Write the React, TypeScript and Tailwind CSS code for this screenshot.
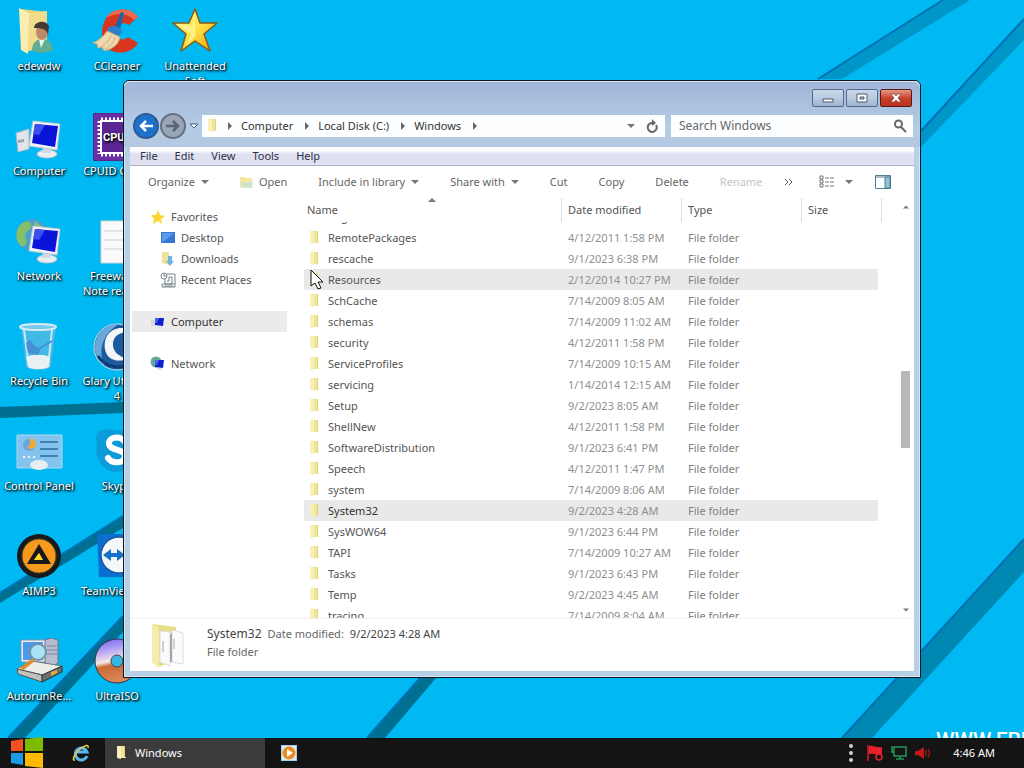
import React, { useEffect, useRef } from 'react';

const folders = [
  { name: 'Registration', date: '7/14/2009 8:04 AM' },
  { name: 'RemotePackages', date: '4/12/2011 1:58 PM' },
  { name: 'rescache', date: '9/1/2023 6:38 PM' },
  { name: 'Resources', date: '2/12/2014 10:27 PM', hover: true },
  { name: 'SchCache', date: '7/14/2009 8:05 AM' },
  { name: 'schemas', date: '7/14/2009 11:02 AM' },
  { name: 'security', date: '4/12/2011 1:58 PM' },
  { name: 'ServiceProfiles', date: '7/14/2009 10:15 AM' },
  { name: 'servicing', date: '1/14/2014 12:15 AM' },
  { name: 'Setup', date: '9/2/2023 8:05 AM' },
  { name: 'ShellNew', date: '4/12/2011 1:58 PM' },
  { name: 'SoftwareDistribution', date: '9/1/2023 6:41 PM' },
  { name: 'Speech', date: '4/12/2011 1:47 PM' },
  { name: 'system', date: '7/14/2009 8:06 AM' },
  { name: 'System32', date: '9/2/2023 4:28 AM', selected: true },
  { name: 'SysWOW64', date: '9/1/2023 6:44 PM' },
  { name: 'TAPI', date: '7/14/2009 10:27 AM' },
  { name: 'Tasks', date: '9/1/2023 6:43 PM' },
  { name: 'Temp', date: '9/2/2023 4:45 AM' },
  { name: 'tracing', date: '7/14/2009 8:04 AM' },
];

/* ---------- Wallpaper ---------- */

const Wallpaper: React.FC = () => (
  <svg className="absolute inset-0 h-full w-full" viewBox="0 0 1024 768" preserveAspectRatio="none" aria-hidden="true">
    <rect width="1024" height="768" fill="#00b9f2" />
    <g fill="#0096c8">
      <path d="M943 0H970L842 79H818Z" />
      <path d="M1024 19V40L921 147V131Z" />
    </g>
    <g fill="#0088b3">
      <path d="M1024 539V572L872 738H842Z" />
    </g>
    <g fill="#007092">
      <path d="M0 407L123 402V413L0 418Z" />
      <path d="M0 593L123 516V528L0 603Z" />
      <path d="M8 738L123 616V632L25 738Z" />
      <path d="M367 738L420 678H436L385 738Z" />
    </g>
    <g stroke="#0070b4" strokeWidth="2">
      <path d="M943 0L818 79" />
      <path d="M1024 19L921 131" />
      <path d="M1024 539L842 738" />
      <path d="M0 593L123 516" />
      <path d="M8 738L123 616" />
      <path d="M367 738L420 678" />
    </g>
  </svg>
);

/* ---------- Desktop icons ---------- */

const UserFolderIcon = () => (
  <svg viewBox="0 0 48 48" className="h-12 w-12">
    <path d="M6 1L32 4V38L11 44Z" fill="#e9d27b" />
    <path d="M14 5L32 3V36L13 42Z" fill="#f0dc8c" />
    <path d="M4 0L14 5L13 46L6 42Z" fill="#fbeeb0" />
    <path d="M17 43C17 34 22 31 28 31S38 36 38 43L26 45Z" fill="#5fae92" />
    <path d="M24 31L26 40L30 31Z" fill="#eef6f2" />
    <ellipse cx="27" cy="24" rx="6" ry="8" fill="#c08a6a" />
    <path d="M19 20C19 13 31 11 34 18L33 27C32 21 27 20 19 20Z" fill="#453a36" />
  </svg>
);

const CCleanerIcon = () => (
  <svg viewBox="0 0 48 48" className="h-12 w-12">
    <path d="M45 9C38-1 20-1 13 10C6 22 8 38 19 43C29 47 41 43 45 35L35 29C31 33 25 32 23 26C21 18 29 12 36 17Z" fill="#d8361f" />
    <path d="M45 9C38-1 20-1 13 10C24 4 34 5 41 12Z" fill="#ef6b4d" />
    <path d="M28 4L31 5L27 22L21 21Z" fill="#1f62b0" />
    <path d="M15 20C19 16 28 18 29 24L24 31L14 25Z" fill="#2f7fd0" />
    <path d="M14 23L27 29C26 36 20 41 11 43L9 39L5 40L4 36L0 35C6 32 10 29 14 23Z" fill="#f0d8ae" stroke="#c9a977" />
    <path d="M18 27C16 33 12 37 8 39M22 29C21 34 17 39 11 42" stroke="#cfae7b" fill="none" />
  </svg>
);

const StarIcon = () => (
  <svg viewBox="0 0 48 48" className="h-12 w-12">
    <defs>
      <linearGradient id="star" x1="0" y1="0" x2="1" y2="1">
        <stop offset="0" stopColor="#fffbb0" />
        <stop offset="0.5" stopColor="#ffe34a" />
        <stop offset="1" stopColor="#f09a00" />
      </linearGradient>
    </defs>
    <path d="M24 1L29 15L46 15L33 26L39 43L24 33L10 43L15 26L2 15L18 15Z" fill="url(#star)" stroke="#8a5a12" strokeWidth="1.5" strokeLinejoin="round" />
    <path d="M24 6L22 18L8 17L20 26L15 38L24 29Z" fill="#fff7a0" opacity="0.7" />
  </svg>
);

const Monitor = () => (
  <g>
    <ellipse cx="32" cy="41" rx="10" ry="4" fill="#e8eef2" stroke="#b9c6d0" />
    <path d="M28 34L36 35V40H27Z" fill="#cfdae2" />
    <path d="M18 8L45 11L42 37L14 33Z" fill="#f0f3f6" stroke="#b8c8d4" />
    <path d="M20 11L43 13L40 34L17 30Z" fill="#0a14d8" />
    <path d="M20 11L30 12L24 22L18 21Z" fill="#3c50ee" />
  </g>
);

const ComputerIcon = () => (
  <svg viewBox="0 0 48 48" className="h-12 w-12">
    <path d="M1 20L14 16V36L3 39Z" fill="#dfe5ea" stroke="#a8b8c4" />
    <path d="M3 27L9 26V29L3 30Z" fill="#9aaab6" />
    <Monitor />
  </svg>
);

const NetworkIcon = () => (
  <svg viewBox="0 0 48 48" className="h-12 w-12">
    <circle cx="17" cy="17" r="16" fill="#4b9ed2" />
    <path d="M3 10C9 0 19 3 16 10C11 15 8 17 12 22C11 28 8 30 5 27C0 21 1 14 3 10ZM20 3L31 12L25 17L19 10Z" fill="#84c06c" />
    <Monitor />
  </svg>
);

const RecycleIcon = () => (
  <svg viewBox="0 0 48 48" className="h-12 w-12">
    <path d="M6 4H41L36 44C31 48 16 48 11 44Z" fill="#4fb8e4" opacity="0.85" />
    <path d="M9 7L14 43M37 7L33 43" stroke="#c5e8f8" strokeWidth="2" />
    <path d="M11 34C17 31 29 31 35 34L34 44C28 47 17 47 13 44Z" fill="#e8f0f4" />
    <path d="M11 20L15 17L21 24L26 25L23 32L13 30Z" fill="#4790d4" />
    <path d="M25 25L37 18" stroke="#4790d4" strokeWidth="2" />
    <ellipse cx="23" cy="4" rx="18" ry="3" fill="#78cbed" stroke="#d5edf7" strokeWidth="2" />
  </svg>
);

const ControlPanelIcon = () => (
  <svg viewBox="0 0 48 48" className="h-12 w-12">
    <path d="M2 7H47V40H2Z" fill="#84c3ee" stroke="#a9daf7" />
    <circle cx="14" cy="17" r="6" fill="#6ba7d8" />
    <path d="M15 17V11A5 5 0 1 1 12 19Z" fill="#eda83b" />
    <path d="M25 14H43M25 21H43M25 28H43" stroke="#3c83b4" strokeWidth="2" />
    <path d="M8 29H22" stroke="#eaf6ff" strokeWidth="2" strokeDasharray="2 3" />
    <ellipse cx="24" cy="37" rx="9" ry="5" fill="#e8edf0" />
  </svg>
);

const AimpIcon = () => (
  <svg viewBox="0 0 48 48" className="h-12 w-12">
    <circle cx="24" cy="23" r="22" fill="#17191b" />
    <circle cx="24" cy="23" r="17" fill="#f79a1c" stroke="#56452b" />
    <path d="M24 11L36 31H30L24 20L19 27H28L30 31H12Z" fill="#16181a" />
    <path d="M24 20L28 27H19Z" fill="#ffdb26" />
  </svg>
);

const AutorunIcon = () => (
  <svg viewBox="0 0 48 48" className="h-12 w-12">
    <path d="M6 2H36V24H6Z" fill="#e9eef6" stroke="#8795a8" />
    <path d="M8 4H28V22H8Z" fill="#4a9ae8" />
    <path d="M30 2L36 0L43 2V25L38 28L30 25Z" fill="#b7bdd0" stroke="#6a7083" />
    <path d="M32 8H42M32 12H42M32 16H42" stroke="#7d86a0" />
    <path d="M2 31L17 23L47 28L28 37Z" fill="#eceee9" stroke="#777" />
    <path d="M2 31L27 37V44L3 36Z" fill="#bfc2bd" stroke="#555" />
    <path d="M27 37L47 28V34L27 44Z" fill="#6c6f70" stroke="#333" />
    <path d="M36 34L42 32V35L36 38Z" fill="#d9b23c" />
    <path d="M18 22L8 30" stroke="#e18c2c" strokeWidth="4" strokeLinecap="round" />
    <circle cx="23" cy="14" r="8" fill="#a9e2f6" stroke="#7193ab" strokeWidth="2" />
  </svg>
);

const CpuidIcon = () => (
  <svg viewBox="0 0 48 48" className="h-12 w-12">
    <rect x="0" y="0" width="48" height="48" rx="3" fill="#6a2fa4" stroke="#472070" />
    <rect x="8" y="8" width="33" height="32" fill="#5c2594" stroke="#fff" strokeWidth="2" />
    <path d="M8 6H42M8 42H42" stroke="#fff" strokeWidth="3" strokeDasharray="2 2" />
    <path d="M6 8V41M43 8V41" stroke="#fff" strokeWidth="3" strokeDasharray="2 2" />
    <text x="10" y="28" fill="#fff" fontSize="11" fontWeight="700" fontFamily="Roboto, sans-serif">CPUID</text>
  </svg>
);

const NoteIcon = () => (
  <svg viewBox="0 0 48 48" className="h-12 w-12">
    <path d="M8 3H42V45H8Z" fill="#fafafa" stroke="#d2d6d8" />
    <path d="M11 13H39M11 22H39M11 31H39" stroke="#cdd3d7" />
  </svg>
);

const GlaryIcon = () => (
  <svg viewBox="0 0 48 48" className="h-12 w-12">
    <circle cx="24" cy="24" r="23" fill="#1c5c9e" stroke="#cfe3f2" />
    <path d="M26 1A23 23 0 0 0 12 43C3 26 12 9 26 1Z" fill="#6aa8dc" />
    <path d="M30 5C18 4 10 14 12 26S26 40 36 35C25 35 19 27 20 20S26 9 36 9Z" fill="#f3f6f8" />
    <path d="M5 33C13 45 30 48 42 38" stroke="#0d3c73" strokeWidth="3" fill="none" />
  </svg>
);

const SkypeIcon = () => (
  <svg viewBox="0 0 48 48" className="h-12 w-12">
    <path d="M4 15C0 5 10-2 20 3C35-1 49 12 45 27C51 38 40 48 30 43C14 48 0 33 4 15Z" fill="#0a9bd8" />
    <path d="M32 14C27 7 15 9 16 16C17 23 32 21 32 28C32 36 19 36 15 30" stroke="#fff" strokeWidth="6" fill="none" strokeLinecap="round" />
  </svg>
);

const TeamViewerIcon = () => (
  <svg viewBox="0 0 48 48" className="h-12 w-12">
    <path d="M4 1H46V44H6Z" fill="#0c6fd0" />
    <circle cx="26" cy="22" r="18" fill="#f4f8fb" stroke="#1b59a0" strokeWidth="1.5" />
    <path d="M10 22L18 16V20H24V16L32 22L24 28V24H18V28Z" fill="#1672c8" />
  </svg>
);

const DiscIcon = () => (
  <svg viewBox="0 0 48 48" className="h-12 w-12">
    <defs>
      <linearGradient id="disc" x1="0" y1="0" x2="0.2" y2="1">
        <stop offset="0" stopColor="#6a62e4" />
        <stop offset="0.3" stopColor="#b5a2f6" />
        <stop offset="0.55" stopColor="#f5e9e4" />
        <stop offset="0.65" stopColor="#c86a35" />
        <stop offset="1" stopColor="#d88758" />
      </linearGradient>
    </defs>
    <circle cx="24" cy="23" r="22" fill="url(#disc)" stroke="#3b2d4c" />
    <circle cx="24" cy="23" r="6" fill="#39b6e2" stroke="#3b4654" />
  </svg>
);

const shortcuts = [
  { label: 'edewdw', icon: UserFolderIcon },
  { label: 'Computer', icon: ComputerIcon },
  { label: 'Network', icon: NetworkIcon },
  { label: 'Recycle Bin', icon: RecycleIcon },
  { label: 'Control Panel', icon: ControlPanelIcon },
  { label: 'AIMP3', icon: AimpIcon },
  { label: 'AutorunRe...', icon: AutorunIcon },
  { label: 'CCleaner', icon: CCleanerIcon },
  { label: 'CPUID CPU-Z', icon: CpuidIcon },
  { label: 'Freeware - Note readme', icon: NoteIcon },
  { label: 'Glary Utilities 4', icon: GlaryIcon },
  { label: 'Skype', icon: SkypeIcon },
  { label: 'TeamViewer 8', icon: TeamViewerIcon },
  { label: 'UltraISO', icon: DiscIcon },
  { label: 'Unattended Soft', icon: StarIcon },
];

/* ---------- Small icons ---------- */

const Triangle: React.FC<{ className?: string }> = ({ className = 'w-2' }) => (
  <svg viewBox="0 0 8 4" className={`h-1 shrink-0 fill-[#777] ${className}`} aria-hidden="true">
    <path d="M0 0H8L4 4Z" />
  </svg>
);

const FolderIcon: React.FC = () => (
  <svg viewBox="0 0 16 16" className="h-4 w-4 shrink-0" aria-hidden="true">
    <path d="M4 1H12V13H4Z" fill="#f0e698" />
    <path d="M4 1L8 2V14L4 13Z" fill="#f7f0b8" />
    <path d="M11 1H12V13H11Z" fill="#e2d274" />
    <path d="M8 12H13V13H8Z" fill="#f0e698" />
  </svg>
);

const SmallMonitor = ({ globe = false }) => (
  <svg viewBox="0 0 16 16" className="h-4 w-4 shrink-0" aria-hidden="true">
    {globe ? <circle cx="6" cy="6" r="5.5" fill="#62ab98" /> : <path d="M1 6H5V12H1Z" fill="#d5dadd" />}
    <path d="M5 4L14 4L13 12L5 11Z" fill="#1020d0" />
    <path d="M5 4L9 4L7 9H5Z" fill="#4464ea" />
    <path d="M7 12H12V14H7Z" fill="#dde4e8" />
  </svg>
);

const sideItems = [
  {
    label: 'Favorites', icon: (
      <svg viewBox="0 0 16 16" className="h-4 w-4 shrink-0"><path d="M8 1L10 6L15 7L11 10L12 15L8 12L3 15L4 10L1 6L6 6Z" fill="#fbd735" /></svg>
    ),
  },
  {
    label: 'Desktop', nested: true, icon: (
      <svg viewBox="0 0 16 16" className="h-4 w-4 shrink-0"><path d="M1 2H15V13H1Z" fill="#3876d6" /><path d="M2 3H14L3 12H2Z" fill="#5e9aea" /></svg>
    ),
  },
  {
    label: 'Downloads', nested: true, icon: (
      <svg viewBox="0 0 16 16" className="h-4 w-4 shrink-0"><path d="M2 1H9V14L2 12Z" fill="#eee39a" /><path d="M8 5H12V10H14L10 15L6 10H8Z" fill="#6cb2ea" /></svg>
    ),
  },
  {
    label: 'Recent Places', nested: true, icon: (
      <svg viewBox="0 0 16 16" className="h-4 w-4 shrink-0" fill="none" stroke="#75838a"><circle cx="4" cy="4" r="3" /><path d="M4 2V4H6M7 2H15V12M5 7V12H15V15H2V12H12V5H9V9H7M4 14H13" /></svg>
    ),
  },
  null,
  { label: 'Computer', icon: <SmallMonitor />, selected: true },
  null,
  { label: 'Network', icon: <SmallMonitor globe /> },
];

/* ---------- Explorer window ---------- */

const TitleBar: React.FC = () => (
  <div className="flex h-7 justify-end gap-0.5 pt-2 pr-2">
    <button aria-label="Minimize" className="flex h-[18px] w-8 items-center justify-center rounded-xs border border-[#54698a] bg-linear-to-b from-[#c9d8ea] via-[#b9cbe1] via-50% to-[#9db4d0]">
      <svg viewBox="0 0 12 12" className="h-3 w-3"><path d="M1 7H11V10H1Z" fill="#fff" stroke="#4a566b" /></svg>
    </button>
    <button aria-label="Maximize" className="flex h-[18px] w-8 items-center justify-center rounded-xs border border-[#54698a] bg-linear-to-b from-[#c9d8ea] via-[#b9cbe1] via-50% to-[#9db4d0]">
      <svg viewBox="0 0 12 12" className="h-3 w-3"><path d="M1 2H11V10H1ZM4 5V7H8V5Z" fill="#fff" fillRule="evenodd" stroke="#4a566b" /></svg>
    </button>
    <button aria-label="Close" className="flex h-[18px] w-8 items-center justify-center rounded-xs border border-[#5c1515] bg-linear-to-b from-[#e09a88] via-[#c8402b] via-50% to-[#b9301c]">
      <svg viewBox="0 0 12 12" className="h-3 w-3"><path d="M1 2H4L6 4L8 2H11L8 6L11 10H8L6 8L4 10H1L4 6Z" fill="#fff" stroke="#6b2a22" strokeWidth="0.5" /></svg>
    </button>
  </div>
);

const Crumb: React.FC<{ children?: React.ReactNode }> = ({ children }) => (
  <>
    <svg viewBox="0 0 4 8" className="h-2 w-1 shrink-0 fill-[#666]" aria-hidden="true"><path d="M0 0L4 4L0 8Z" /></svg>
    {children && <a href="#" className="pr-3 pl-[9px] text-[#333]">{children}</a>}
  </>
);

const AddressBar: React.FC = () => (
  <div className="flex h-[34px] items-center pr-[7px] pl-[9px]">
    <button aria-label="Back" className="flex h-[26px] w-[26px] items-center justify-center rounded-full border-2 border-[#2d5a92] bg-[#1d72cc]">
      <svg viewBox="0 0 16 16" className="h-4 w-4 fill-none stroke-white stroke-[2.5]"><path d="M15 8H3M8 3L3 8L8 13" /></svg>
    </button>
    <button aria-label="Forward" className="ml-px flex h-[26px] w-[26px] items-center justify-center rounded-full border-2 border-[#666f7e] bg-[#99a6b8]">
      <svg viewBox="0 0 16 16" className="h-4 w-4 fill-none stroke-[#5a6370] stroke-[2.5]"><path d="M1 8H13M8 3L13 8L8 13" /></svg>
    </button>
    <button aria-label="Recent pages" className="mx-0.5 flex w-3 justify-center">
      <svg viewBox="0 0 10 6" className="h-1.5 w-2.5"><path d="M1 1H9L5 5Z" fill="#fff" stroke="#4b6484" /></svg>
    </button>
    <div className="flex h-[22px] min-w-0 flex-1 items-center bg-[#fdfeff] pr-1.5 pl-0.5">
      <FolderIcon />
      <span className="w-2 shrink-0" />
      <Crumb>Computer</Crumb>
      <Crumb>Local Disk (C:)</Crumb>
      <Crumb>Windows</Crumb>
      <Crumb />
      <button aria-label="Previous locations" className="mr-2.5 ml-auto"><Triangle /></button>
      <button aria-label="Refresh">
        <svg viewBox="0 0 14 14" className="h-3.5 w-3.5 fill-none stroke-[#666] stroke-2"><path d="M11 6A4.500 4.500 0 1 1 8 4" /><path d="M7 0L11 4L7 7Z" className="fill-[#666] stroke-none" /></svg>
      </button>
    </div>
    <div className="ml-1.5 flex h-[22px] w-[242px] items-center bg-[#fdfeff] px-1.5">
      <input aria-label="Search Windows" placeholder="Search Windows" className="min-w-0 flex-1 pl-0.5 text-xs outline-none placeholder:text-[#666]" />
      <svg viewBox="0 0 14 14" className="h-3.5 w-3.5 fill-none stroke-[#666] stroke-2" aria-hidden="true"><circle cx="5.500" cy="5" r="3.500" /><path d="M8 8L13 13" /></svg>
    </div>
  </div>
);

const MenuBar: React.FC = () => (
  <div className="flex h-[19px] items-center gap-[17px] border-b border-[#b0b0b8] bg-linear-to-b from-white from-20% to-[#dfe0f1] to-40% pl-2.5 text-[#2c3348]">
    {['File', 'Edit', 'View', 'Tools', 'Help'].map((item) => (
      <button key={item}>{item}</button>
    ))}
  </div>
);

const Toolbar: React.FC = () => (
  <div className="flex h-[31px] items-center pr-[23px] pl-[18px] whitespace-nowrap text-[#666]">
    <button className="flex items-center gap-1.5">Organize <Triangle /></button>
    <button className="ml-[30px] flex items-center gap-1">
      <svg viewBox="0 0 16 16" className="h-4 w-4" aria-hidden="true"><path d="M1 3H6L7 4H13V13H1Z" fill="#f2e6a0" /><path d="M2 8H14L13 14H2Z" fill="#d4e6c8" /><path d="M3 10H12" stroke="#b8d8e4" /></svg>
      Open
    </button>
    <button className="ml-[31px] flex items-center gap-1.5">Include in library <Triangle /></button>
    <button className="ml-[31px] flex items-center gap-1.5">Share with <Triangle /></button>
    <button className="ml-[31px]">Cut</button>
    <button className="ml-[31px]">Copy</button>
    <button className="ml-[31px]">Delete</button>
    <button className="ml-[31px] text-[#c4c4c4]" disabled>Rename</button>
    <button aria-label="More commands" className="ml-[22px]">
      <svg viewBox="0 0 10 8" className="h-2 w-2.5 fill-none stroke-[#555]"><path d="M1 1L4 4L1 7M5 1L8 4L5 7" /></svg>
    </button>
    <button aria-label="Change view" className="ml-auto flex items-center gap-2.5">
      <svg viewBox="0 0 16 14" className="h-3.5 w-4 fill-none stroke-[#777]">
        <path d="M1 1H4V4H1ZM1 5H4V8H1ZM1 9H4V12H1Z" />
        <path d="M6 3H15M6 7H15M6 11H15" strokeDasharray="4 1" />
      </svg>
      <Triangle />
    </button>
    <button aria-label="Show the preview pane" className="ml-[22px]">
      <svg viewBox="0 0 16 14" className="h-3.5 w-4"><path d="M0.500 0.500H15.500V13.500H0.500Z" fill="#fff" stroke="#4e7f92" /><path d="M0 2H16" stroke="#4e7f92" /><path d="M10 2H15V13H10Z" fill="#8cc5dc" stroke="#4e7f92" /></svg>
    </button>
  </div>
);

const Sidebar: React.FC = () => (
  <nav className="w-[174px] shrink-0 pt-[9px] text-[#555]">
    {sideItems.map((item, i) =>
      item ? (
        <a
          key={item.label}
          href="#"
          className={`mr-[17px] ml-0.5 flex h-[21px] items-center gap-[5px] ${item.nested ? 'pl-7' : 'pl-[18px]'} ${item.selected ? 'bg-[#ebebeb] text-[#333]' : ''}`}
        >
          {item.icon}
          {item.label}
        </a>
      ) : (
        <div key={i} className="h-[21px]" />
      ),
    )}
  </nav>
);

const FileList: React.FC = () => {
  const listRef = useRef<HTMLDivElement>(null);

  useEffect(() => {
    if (listRef.current) listRef.current.scrollTop = 16;
  }, []);

  return (
    <div ref={listRef} className="mt-px min-w-0 flex-1 overflow-hidden pr-4">
      <table className="w-full table-fixed border-separate border-spacing-0 text-left whitespace-nowrap text-[#555]">
        <thead className="sticky top-0 bg-white">
          <tr className="h-6">
            <th className="relative border-r border-[#ddd] pl-[3px] font-normal">
              Name
              <Triangle className="absolute top-0 left-31 w-2 rotate-180" />
            </th>
            <th className="w-[120px] border-r border-[#ddd] pl-1.5 font-normal">Date modified</th>
            <th className="w-[120px] border-r border-[#ddd] pl-1.5 font-normal">Type</th>
            <th className="w-20 border-r border-[#ddd] pl-1.5 font-normal">Size</th>
          </tr>
        </thead>
        <tbody>
          {folders.map((folder) => (
            <tr key={folder.name} className={`h-[21px] ${folder.hover || folder.selected ? 'bg-[#e9e9e9]' : ''}`}>
              <td className="p-0">
                <div className={`flex items-center gap-1.5 pl-0.5 ${folder.selected ? 'text-[#333]' : ''}`}>
                  <FolderIcon />
                  {folder.name}
                </div>
              </td>
              <td className="p-0 pl-1.5 text-[#8f8f8f]">{folder.date}</td>
              <td className="p-0 pl-1.5 text-[#808080]">File folder</td>
              <td className="border-r-4 border-white p-0" />
            </tr>
          ))}
        </tbody>
      </table>
    </div>
  );
};

const ScrollBar: React.FC = () => (
  <div className="flex w-4 flex-col items-center pt-2 pr-px pb-1.5">
    <Triangle className="w-1.5 rotate-180" />
    <div className="flex-[161]" />
    <div className="h-[77px] w-[9px] bg-[#b8b8b8]" />
    <div className="flex-[159]" />
    <Triangle className="w-1.5" />
  </div>
);

const DetailsPane: React.FC = () => (
  <div className="flex h-[53px] gap-[21px] border-t border-[#f2f2f2] pt-1 pl-5 text-[#666]">
    <svg viewBox="0 0 36 46" className="h-[46px] w-9" aria-hidden="true">
      <path d="M2 1L26 4V38L8 44L2 39Z" fill="#e8dc86" />
      <path d="M2 1L9 5V45L2 39Z" fill="#f4ecac" />
      <path d="M10 8L20 9V43L10 39Z" fill="#fbfbfb" stroke="#ddd" />
      <path d="M22 7L33 10V41L22 39Z" fill="#fbfbfb" stroke="#ddd" />
      <path d="M21 11V39" stroke="#a2a7ab" strokeWidth="2" />
      <path d="M13 18V29M24 16V26" stroke="#ccd1d5" strokeWidth="2" />
    </svg>
    <div className="pt-0.5 leading-[18px]">
      <div className="flex gap-1.5">
        <span className="text-xs leading-[18px] text-[#444]">System32</span>
        <span>Date modified:</span>
        <span className="text-[#444]">9/2/2023 4:28 AM</span>
      </div>
      <div>File folder</div>
    </div>
  </div>
);

const ExplorerWindow: React.FC = () => (
  <section
    aria-label="Windows"
    className="absolute top-20 right-[103px] bottom-[90px] left-[123px] flex flex-col rounded-t-md border border-[#101820] bg-[#b9cfe6] shadow-[inset_0_0_0_1px_#d5e6f4]"
  >
    <div className="rounded-t-md bg-linear-to-b from-[#9fb6d8] via-[#b5cce6] via-70% to-[#b3c8e0] pb-1 shadow-[inset_0_1px_0_#dbe9f5]">
      <TitleBar />
      <AddressBar />
    </div>
    <div className="mx-1.5 mb-1.5 flex min-h-0 flex-1 flex-col bg-white">
      <MenuBar />
      <Toolbar />
      <div className="flex min-h-0 flex-1">
        <Sidebar />
        <FileList />
        <ScrollBar />
      </div>
      <DetailsPane />
    </div>
  </section>
);

/* ---------- Taskbar ---------- */

const Taskbar: React.FC = () => (
  <footer className="relative flex h-[30px] shrink-0 items-center bg-[#141414] text-white">
    <button aria-label="Start" className="ml-2.5 flex">
      <svg viewBox="0 0 34 32" className="h-8 w-[34px]">
        <path d="M1 4L13 2V14H1Z" fill="#f25022" />
        <path d="M15 2L33 0V14H15Z" fill="#7fba00" />
        <path d="M1 16H13V28L1 26Z" fill="#1c9be8" />
        <path d="M15 16H33V31L15 29Z" fill="#ffb900" />
      </svg>
    </button>
    <button aria-label="Internet Explorer" className="ml-7">
      <svg viewBox="0 0 18 18" className="h-[18px] w-[18px]" fill="none">
        <path d="M15 12A6 6 0 1 1 15 8H5" stroke="#58b8ee" strokeWidth="3" />
        <path d="M3 16C-1 17 3 9 8 5S17 0 16 4" stroke="#f0d23c" strokeWidth="1.5" />
      </svg>
    </button>
    <button className="ml-[15px] flex h-full w-40 items-center gap-1.5 bg-[#3b3b3b] pl-2">
      <FolderIcon />
      Windows
    </button>
    <button aria-label="Windows Media Player" className="ml-4">
      <svg viewBox="0 0 16 16" className="h-4 w-4"><path d="M0 0H16V16H0Z" fill="#a8cfea" /><path d="M1 1H15V15H1Z" fill="#dcebf5" /><circle cx="8" cy="8" r="6.500" fill="#ee8a1c" /><path d="M6 4L12 8L6 12Z" fill="#fff" /></svg>
    </button>
    <div className="ml-auto flex items-center gap-2 pr-[29px]">
      <svg viewBox="0 0 4 18" className="mr-1.5 h-[18px] w-1 fill-[#d0d0d0]"><circle cx="2" cy="2" r="2" /><circle cx="2" cy="9" r="2" /><circle cx="2" cy="16" r="2" /></svg>
      <svg viewBox="0 0 16 16" className="h-4 w-4"><path d="M1 0V16" stroke="#d81c28" strokeWidth="1.5" /><path d="M2 1C6 0 8 3 15 2V10H9C7 8 5 9 2 9Z" fill="#e8202c" /><circle cx="12" cy="12" r="3" fill="#161616" stroke="#e8202c" strokeWidth="1.5" /></svg>
      <svg viewBox="0 0 16 16" className="h-4 w-4 fill-none stroke-[#22965a] stroke-[1.5]"><path d="M3 2H15V11H3ZM9 11V14M5 14H13M1 1V7M0 7H3" /></svg>
      <svg viewBox="0 0 16 16" className="h-4 w-4"><path d="M0 6H3L9 2V14L3 10H0Z" fill="#c81616" /><path d="M11 5V11M13 4C15 6 15 10 13 12" stroke="#961818" fill="none" strokeWidth="1.5" /></svg>
      <time className="ml-3.5">4:46 AM</time>
    </div>
  </footer>
);

export default function App() {
  return (
    <div className="relative flex h-screen flex-col overflow-hidden font-['Noto_Sans',sans-serif] text-[11px] leading-4">
      <Wallpaper />
      <main className="min-h-0 flex-1">
        <div className="relative grid w-max auto-cols-[78px] grid-flow-col grid-rows-[repeat(7,105px)]">
          {shortcuts.map(({ label, icon: Icon }) => (
            <a
              key={label}
              href="#"
              className="flex flex-col items-center pt-2 text-center leading-[15px] text-white [text-shadow:1px_1px_2px_#000,1px_1px_3px_#000]"
            >
              <Icon />
              <span className="mt-0.5 w-[74px]">{label}</span>
            </a>
          ))}
        </div>
      </main>
      <div className="absolute top-[728px] left-[936px] font-[Roboto,sans-serif] text-[21px] leading-6 font-medium whitespace-nowrap text-white">
        WWW.FREE
      </div>
      <ExplorerWindow />
      <Taskbar />
      {/* Mouse pointer */}
      <svg viewBox="0 0 14 22" className="absolute top-[269px] left-[310px] h-[22px] w-3.5" aria-hidden="true">
        <path d="M1 1V17L5 14L8 20L11 19L8 13H13Z" fill="#fff" stroke="#111" />
      </svg>
    </div>
  );
}
